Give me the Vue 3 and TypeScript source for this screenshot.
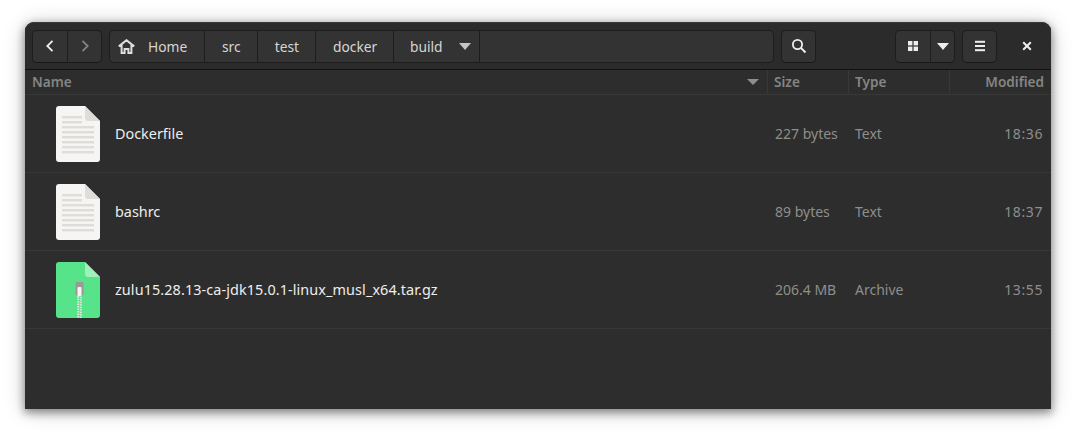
<script setup lang="ts">
interface FileRow {
  name: string
  size: string
  type: string
  modified: string
  archive?: boolean
}
const crumbs = ['src', 'test', 'docker']
const files: FileRow[] = [
  { name: 'Dockerfile', size: '227 bytes', type: 'Text', modified: '18:36' },
  { name: 'bashrc', size: '89 bytes', type: 'Text', modified: '18:37' },
  { name: 'zulu15.28.13-ca-jdk15.0.1-linux_musl_x64.tar.gz', size: '206.4 MB', type: 'Archive', modified: '13:55', archive: true }
]
const lines = [96, 96, 96, 96, 96, 96]
</script>

<template>
  <div class="stage">
    <div class="window">
      <header class="bar">
        <div class="group nav">
          <button class="btn navbtn">
            <svg width="16" height="16" viewBox="0 0 16 16"><path d="M10.5 2.8 5.3 8l5.2 5.2" fill="none" stroke="#eeeeec" stroke-width="1.8"/></svg>
          </button>
          <button class="btn navbtn">
            <svg width="16" height="16" viewBox="0 0 16 16"><path d="M5.5 2.8 10.7 8l-5.2 5.2" fill="none" stroke="#84847f" stroke-width="1.8"/></svg>
          </button>
        </div>
        <div class="path">
          <div class="crumb home">
            <svg width="17" height="15" viewBox="0 0 17 15"><path d="M.8 7.4 8.5 1.2l7.7 6.2M3.6 6v7.9h3V10h3.8v3.9h3V6" fill="none" stroke="#dededb" stroke-width="2"/></svg>
            <span>Home</span>
          </div>
          <div v-for="c in crumbs" :key="c" class="crumb">{{ c }}</div>
          <div class="crumb last">
            <span>build</span>
            <i class="caret dim"></i>
          </div>
        </div>
        <button class="btn search">
          <svg width="16" height="16" viewBox="0 0 16 16"><circle cx="6.5" cy="6.5" r="4.6" fill="none" stroke="#eeeeec" stroke-width="1.8"/><path d="m9.9 9.9 4.6 4.6" stroke="#eeeeec" stroke-width="2"/></svg>
        </button>
        <div class="group view">
          <button class="btn gridbtn">
            <svg width="12" height="12" viewBox="0 0 12 12" fill="#eeeeec"><rect x="1" y="1" width="4.4" height="4.4"/><rect x="6.6" y="1" width="4.4" height="4.4"/><rect x="1" y="6.6" width="4.4" height="4.4"/><rect x="6.6" y="6.6" width="4.4" height="4.4"/></svg>
          </button>
          <button class="btn drop"><i class="caret"></i></button>
        </div>
        <button class="btn menu">
          <svg width="12" height="12" viewBox="0 0 12 12" fill="#eeeeec"><rect x="1" y=".8" width="10" height="2"/><rect x="1" y="5" width="10" height="2"/><rect x="1" y="9.2" width="10" height="2"/></svg>
        </button>
        <div class="close">
          <svg width="10" height="10" viewBox="0 0 10 10"><path d="m1.2 1.2 7.6 7.6M8.8 1.2 1.2 8.8" stroke="#eeeeec" stroke-width="2"/></svg>
        </div>
      </header>

      <div class="cols">
        <div class="c-name"><span>Name</span><i class="caret sort"></i></div>
        <div class="c-size">Size</div>
        <div class="c-type">Type</div>
        <div class="c-mod">Modified</div>
      </div>

      <div v-for="f in files" :key="f.name" class="row">
        <svg class="icon" width="44" height="56" viewBox="0 0 44 56">
          <template v-if="f.archive">
            <path d="M3 0h26l15 15v38a3 3 0 0 1-3 3H3a3 3 0 0 1-3-3V3a3 3 0 0 1 3-3z" fill="#57e389"/>
            <path d="M29 0l15 15H32a3 3 0 0 1-3-3z" fill="#a0f0bc"/>
            <rect x="19.5" y="20" width="8" height="13" rx="1" fill="#9a9a96"/>
            <rect x="21.5" y="25" width="4" height="9" rx="1" fill="#f6f5f4"/>
            <path d="M22.2 34v22" stroke="#e6e6e3" stroke-width="2" stroke-dasharray="1.5 1"/>
            <path d="M24.8 34.8v21.2" stroke="#e6e6e3" stroke-width="2" stroke-dasharray="1.5 1"/>
          </template>
          <template v-else>
            <path d="M3 0h26l15 15v38a3 3 0 0 1-3 3H3a3 3 0 0 1-3-3V3a3 3 0 0 1 3-3z" fill="#f6f5f4"/>
            <path d="M29 0l15 15H32a3 3 0 0 1-3-3z" fill="#deddda"/>
            <rect x="6" y="10" width="20" height="2.4" fill="#deddda"/>
            <rect x="6" y="15" width="20" height="2.4" fill="#deddda"/>
            <rect v-for="(w, i) in lines" :key="i" x="6" :y="20 + i * 5" width="32" height="2.4" fill="#deddda"/>
          </template>
        </svg>
        <div class="fname" :class="{ long: f.archive }">{{ f.name }}</div>
        <div class="fsize">{{ f.size }}</div>
        <div class="ftype">{{ f.type }}</div>
        <div class="fmod">{{ f.modified }}</div>
      </div>
    </div>
  </div>
</template>

<style>
html, body { margin: 0; background: #fff; }
</style>

<style scoped>
.stage {
  width: 1076px;
  height: 437px;
  padding: 22px 25px 28px;
  box-sizing: border-box;
  overflow: hidden;
  font-family: "Noto Sans", sans-serif;
  font-size: 14px;
}
.window {
  height: 387px;
  background: #2d2d2d;
  border-radius: 9px 9px 0 0;
  box-shadow: 0 3px 9px 1px rgba(0, 0, 0, 0.4), 0 2px 22px rgba(0, 0, 0, 0.2);
  color: #eeeeec;
}
.bar {
  height: 46px;
  box-sizing: content-box;
  background: #2b2b2b;
  border-bottom: 1px solid #111;
  border-top: 1px solid #3a3a3a;
  border-radius: 9px 9px 0 0;
  display: flex;
  align-items: center;
  padding: 0 0 0 7px;
}
button { font: inherit; padding: 0; color: inherit; }
.btn {
  flex: none;
  height: 33px;
  background: #333;
  border: 1px solid #1d1d1d;
  border-bottom-color: #181818;
  border-radius: 5px;
  display: flex;
  align-items: center;
  justify-content: center;
  box-sizing: border-box;
}
.group { display: flex; flex: none; }
.navbtn { width: 35px; }
.navbtn:first-child { border-radius: 5px 0 0 5px; border-right: 0; width: 35px; }
.navbtn:last-child { border-radius: 0 5px 5px 0; }
.nav { width: 70px; }
.path {
  flex: none;
  margin-left: 7px;
  width: 665px;
  height: 33px;
  box-sizing: border-box;
  background: #333;
  border: 1px solid #1d1d1d;
  border-radius: 5px;
  display: flex;
  color: #d6d6d3;
  font-size: 13.8px;
}
.crumb {
  display: flex;
  align-items: center;
  height: 100%;
  box-sizing: border-box;
  padding: 0 16px 0 17px;
  border-right: 1px solid #1d1d1d;
}
.home { padding: 0 16px 0 8px; width: 95px; gap: 13px; }
.last { width: 86px; gap: 16px; padding-left: 15.6px; }
.caret {
  display: block;
  width: 0;
  height: 0;
  border-left: 6px solid transparent;
  border-right: 6px solid transparent;
  border-top: 7px solid #eeeeec;
}
.dim { border-top-color: #c4c4c1; }
.search { width: 35px; margin-left: 7px; }
.view { margin-left: 79px; }
.gridbtn { width: 35px; border-radius: 5px 0 0 5px; border-right: 0; }
.drop { width: 25px; border-radius: 0 5px 5px 0; }
.menu { width: 35px; margin-left: 7px; }
.close { flex: none; width: 46px; height: 33px; margin-left: 7px; display: flex; align-items: center; justify-content: center; }
.cols {
  height: 24px;
  display: flex;
  align-items: center;
  border-bottom: 1px solid #383838;
  color: #858583;
  font-weight: 600;
  font-size: 13.6px;
  line-height: 22px;
}
.cols > div { height: 100%; display: flex; align-items: center; box-sizing: border-box; padding-bottom: 1px; }
.c-name { width: 743px; padding: 0 7px; justify-content: space-between; border-right: 1px solid #383838; }
.sort { border-top-color: #8e8e8c; border-left-width: 6px; border-right-width: 6px; border-top-width: 6px; margin-right: 1px; }
.c-size { width: 81px; padding-left: 6px; border-right: 1px solid #383838; }
.c-type { width: 101px; padding-left: 6px; border-right: 1px solid #383838; }
.c-mod { flex: 1; justify-content: flex-end; padding-right: 7px; }
.row {
  height: 77px;
  display: flex;
  align-items: center;
  border-bottom: 1px solid #383838;
  padding-left: 31px;
}
.icon { flex: none; }
.fname { width: 660px; margin-left: 15px; flex: none; font-size: 14.4px; }
.long { letter-spacing: 0.1px; }
.fsize { width: 80px; color: #8e8e8c; flex: none; }
.ftype { width: 100px; color: #8e8e8c; flex: none; }
.fmod { flex: 1; text-align: right; padding-right: 8px; color: #8e8e8c; letter-spacing: 0.6px; }
</style>
